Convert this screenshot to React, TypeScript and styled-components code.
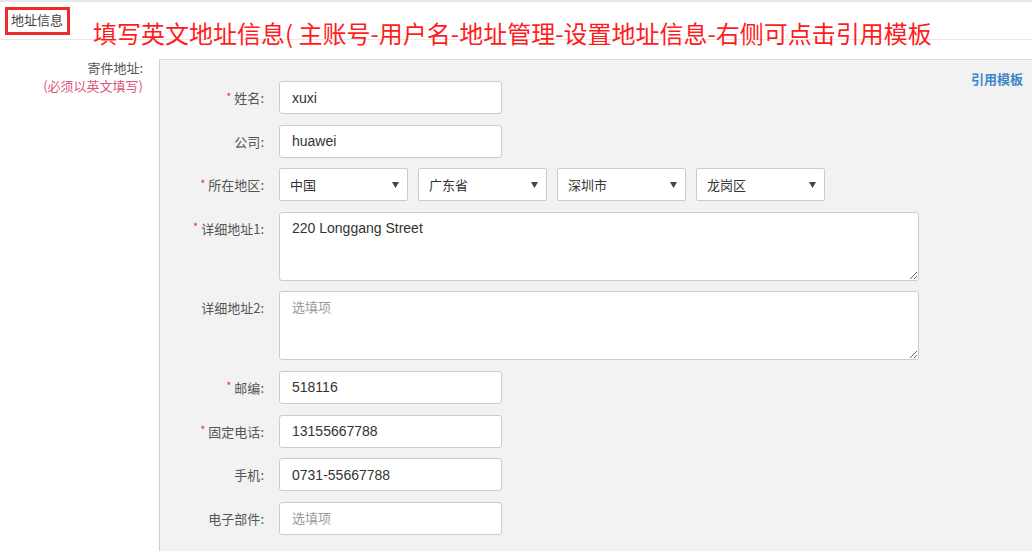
import React from 'react';
import styled, { createGlobalStyle } from 'styled-components';

const GlobalStyle = createGlobalStyle`
  html, body {
    margin: 0;
    padding: 0;
    background: #fff;
    overflow: hidden;
  }
  body {
    font-family: "Liberation Sans", "Noto Sans CJK SC", sans-serif;
    color: #333;
  }
`;

const Page = styled.div`
  width: 1032px;
  height: 551px;
  border-top: 2px solid #e6e7ea;
  box-sizing: border-box;
  display: flex;
  flex-direction: column;
  overflow: hidden;
`;

const Header = styled.div`
  position: relative;
  height: 38px;
  flex-shrink: 0;
  border-bottom: 1px solid #e8e8e8;
  display: flex;
  align-items: flex-start;
  padding-top: 5px;
  box-sizing: border-box;
`;

const TitleBox = styled.div`
  margin-left: 5px;
  padding: 1px 4px 3px 3px;
  border: 3px solid #ee2b2b;
  font-family: "Noto Sans CJK SC", sans-serif;
  font-size: 13px;
  line-height: 18px;
  color: #444;
`;

const Annotation = styled.div`
  position: absolute;
  left: 93px;
  top: 15px;
  font-family: "Noto Sans CJK SC", sans-serif;
  font-size: 24px;
  line-height: 32px;
  color: #ff1c1c;
  white-space: nowrap;
`;

const Body = styled.div`
  flex: 1;
  display: flex;
  padding-top: 19px;
  min-height: 0;
`;

const Side = styled.div`
  width: 159px;
  flex-shrink: 0;
  padding-right: 16px;
  box-sizing: border-box;
  text-align: right;
  font-family: "Noto Sans CJK SC", sans-serif;
  font-size: 13px;
  line-height: 18px;
  color: #555;
`;

const SideNote = styled.div`
  color: #e0527a;
`;

const Panel = styled.div`
  flex: 1;
  display: flex;
  justify-content: space-between;
  align-items: flex-start;
  background: #f2f2f2;
  border-top: 1px solid #dcdcdc;
  border-left: 1px solid #cfcfcf;
  padding: 21px 9px 0 0;
`;

const Form = styled.div`
  display: grid;
  grid-template-columns: 104px auto;
  column-gap: 15px;
  row-gap: 10.6px;
`;

const Label = styled.div`
  height: 33px;
  display: flex;
  align-items: center;
  justify-content: flex-end;
  font-family: "Noto Sans CJK SC", sans-serif;
  font-size: 13px;
  color: #555;
  white-space: nowrap;
`;

const Star = styled.span`
  color: #e8364c;
  font-size: 11px;
  margin-right: 3px;
  position: relative;
  top: -2px;
`;

const Input = styled.input`
  width: 223px;
  height: 33px;
  box-sizing: border-box;
  border: 1px solid #cccccc;
  border-radius: 3px;
  background: #fff;
  padding: 0 12px;
  font-family: "Liberation Sans", "Noto Sans CJK SC", sans-serif;
  font-size: 14px;
  color: #333;
  outline: none;
  &::placeholder {
    color: #999;
    font-family: "Noto Sans CJK SC", sans-serif;
    font-size: 13px;
  }
`;

const TextArea = styled.textarea`
  width: 640px;
  height: 69px;
  box-sizing: border-box;
  border: 1px solid #cccccc;
  border-radius: 3px;
  background: #fff;
  padding: 7px 12px;
  margin: 0;
  display: block;
  font-family: "Liberation Sans", "Noto Sans CJK SC", sans-serif;
  font-size: 14px;
  line-height: 16px;
  color: #333;
  outline: none;
  &::placeholder {
    color: #999;
    font-family: "Noto Sans CJK SC", sans-serif;
    font-size: 13px;
  }
`;

const SelectRow = styled.div`
  display: flex;
  gap: 10px;
`;

const Select = styled.div`
  width: 129px;
  height: 33px;
  box-sizing: border-box;
  border: 1px solid #cccccc;
  border-radius: 2px;
  background: #fff;
  padding: 0 8px 0 10px;
  display: flex;
  align-items: center;
  justify-content: space-between;
  font-family: "Noto Sans CJK SC", sans-serif;
  font-size: 13px;
  color: #333;
`;

const Arrow = () => (
  <svg width="7" height="6" viewBox="0 0 7 6">
    <path d="M0 0 H7 L3.5 6 Z" fill="#444" />
  </svg>
);

const TemplateLink = styled.a`
  font-family: "Noto Sans CJK SC", sans-serif;
  font-size: 13px;
  font-weight: bold;
  color: #3d87c9;
  text-decoration: none;
  margin-top: -12px;
  cursor: pointer;
`;

function Field(props: { label: string; required?: boolean; children: React.ReactNode }) {
  return (
    <>
      <Label>
        {props.required && <Star>*</Star>}
        {props.label}:
      </Label>
      <div>{props.children}</div>
    </>
  );
}

export default function App() {
  return (
    <Page>
      <GlobalStyle />
      <Header>
        <TitleBox>地址信息</TitleBox>
        <Annotation>填写英文地址信息( 主账号-用户名-地址管理-设置地址信息-右侧可点击引用模板</Annotation>
      </Header>
      <Body>
        <Side>
          <div>寄件地址:</div>
          <SideNote>(必须以英文填写)</SideNote>
        </Side>
        <Panel>
          <Form>
            <Field label="姓名" required>
              <Input defaultValue="xuxi" />
            </Field>
            <Field label="公司">
              <Input defaultValue="huawei" />
            </Field>
            <Field label="所在地区" required>
              <SelectRow>
                {['中国', '广东省', '深圳市', '龙岗区'].map((v) => (
                  <Select key={v}>
                    <span>{v}</span>
                    <Arrow />
                  </Select>
                ))}
              </SelectRow>
            </Field>
            <Field label="详细地址1" required>
              <TextArea defaultValue="220 Longgang Street" />
            </Field>
            <Field label="详细地址2">
              <TextArea placeholder="选填项" />
            </Field>
            <Field label="邮编" required>
              <Input defaultValue="518116" />
            </Field>
            <Field label="固定电话" required>
              <Input defaultValue="13155667788" />
            </Field>
            <Field label="手机">
              <Input defaultValue="0731-55667788" />
            </Field>
            <Field label="电子部件">
              <Input placeholder="选填项" />
            </Field>
          </Form>
          <TemplateLink>引用模板</TemplateLink>
        </Panel>
      </Body>
    </Page>
  );
}
